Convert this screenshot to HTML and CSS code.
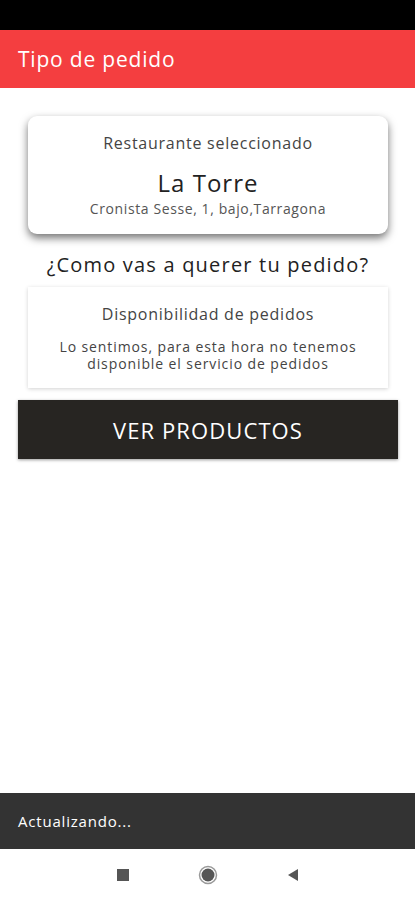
FILE: index.html
```html
<!DOCTYPE html>
<html lang="es">
<head>
	<meta charset="UTF-8">
	<title>Tipo de pedido</title>
	<link rel="stylesheet" href="styles.css">
</head>
<body>
	<div class="screen">
		<div class="status-bar"></div>
		<div class="app-bar">Tipo de pedido</div>
		<div class="content">
			<div class="card card-restaurant">
				<p class="card-label">Restaurante seleccionado</p>
				<p class="restaurant-name">La Torre</p>
				<p class="restaurant-address">Cronista Sesse, 1, bajo,Tarragona</p>
			</div>
			<h2 class="question">¿Como vas a querer tu pedido?</h2>
			<div class="card card-info">
				<p class="card-label">Disponibilidad de pedidos</p>
				<p class="info-text">Lo sentimos, para esta hora no tenemos disponible el servicio de pedidos</p>
			</div>
			<div class="btn-products">VER PRODUCTOS</div>
		</div>
		<div class="snackbar">Actualizando...</div>
		<div class="nav-bar">
			<svg width="14" height="14" viewBox="0 0 14 14"><rect x="1" y="1" width="12" height="12" fill="#555"/></svg>
			<svg width="20" height="20" viewBox="0 0 20 20"><circle cx="10" cy="10" r="8.5" fill="none" stroke="#999" stroke-width="1.5"/><circle cx="10" cy="10" r="6.5" fill="#555"/></svg>
			<svg width="14" height="14" viewBox="0 0 14 14"><polygon points="12,1 12,13 2,7" fill="#555"/></svg>
		</div>
	</div>
</body>
</html>
```
FILE: styles.css
```css
*{
	margin:0;
	padding:0;
	box-sizing:border-box;
}
body{
	font-family:"Open Sans","Liberation Sans",sans-serif;
	background:#fff;
	color:#222;
}
.screen{
	width:415px;
	height:900px;
	display:flex;
	flex-direction:column;
}
.status-bar{
	height:30px;
	background:#000;
}
.app-bar{
	height:58px;
	background:#f43e40;
	color:#fff;
	font-size:21px;
	letter-spacing:.8px;
	padding-left:18px;
	display:flex;
	align-items:center;
}
.content{
	flex:1;
	padding:28px 17px 0 18px;
	display:flex;
	flex-direction:column;
	align-items:center;
}
.card{
	width:360px;
	background:#fff;
	text-align:center;
}
.card-restaurant{
	height:118px;
	border-radius:9px;
	box-shadow:0 4px 8px rgba(0,0,0,.55);
	padding-top:17px;
}
.card-label{
	font-size:16px;
	line-height:20px;
	letter-spacing:.75px;
	color:#444;
}
.restaurant-name{
	font-size:24px;
	line-height:30px;
	letter-spacing:1px;
	color:#222;
	margin-top:15px;
}
.restaurant-address{
	font-size:14px;
	line-height:18px;
	letter-spacing:.6px;
	color:#555;
	margin-top:2px;
}
.question{
	font-size:20px;
	font-weight:normal;
	letter-spacing:1.2px;
	color:#222;
	margin-top:18px;
	line-height:26px;
}
.card-info{
	height:101px;
	margin-top:9px;
	box-shadow:0 1px 4px rgba(0,0,0,.18);
	padding:17px 18px 0;
}
.info-text{
	font-size:14px;
	letter-spacing:.9px;
	color:#444;
	line-height:17px;
	margin-top:14px;
}
.btn-products{
	width:380px;
	height:59px;
	margin-top:12px;
	background:#272522;
	color:#fff;
	font-size:22px;
	letter-spacing:1.1px;
	display:flex;
	align-items:center;
	justify-content:center;
	box-shadow:0 1px 3px rgba(0,0,0,.4);
}
.snackbar{
	height:56px;
	background:#333;
	color:#fff;
	font-size:15px;
	letter-spacing:.8px;
	padding-left:18px;
	display:flex;
	align-items:center;
}
.nav-bar{
	height:51px;
	background:#fff;
	display:flex;
	align-items:center;
	justify-content:center;
	gap:68px;
}
```
